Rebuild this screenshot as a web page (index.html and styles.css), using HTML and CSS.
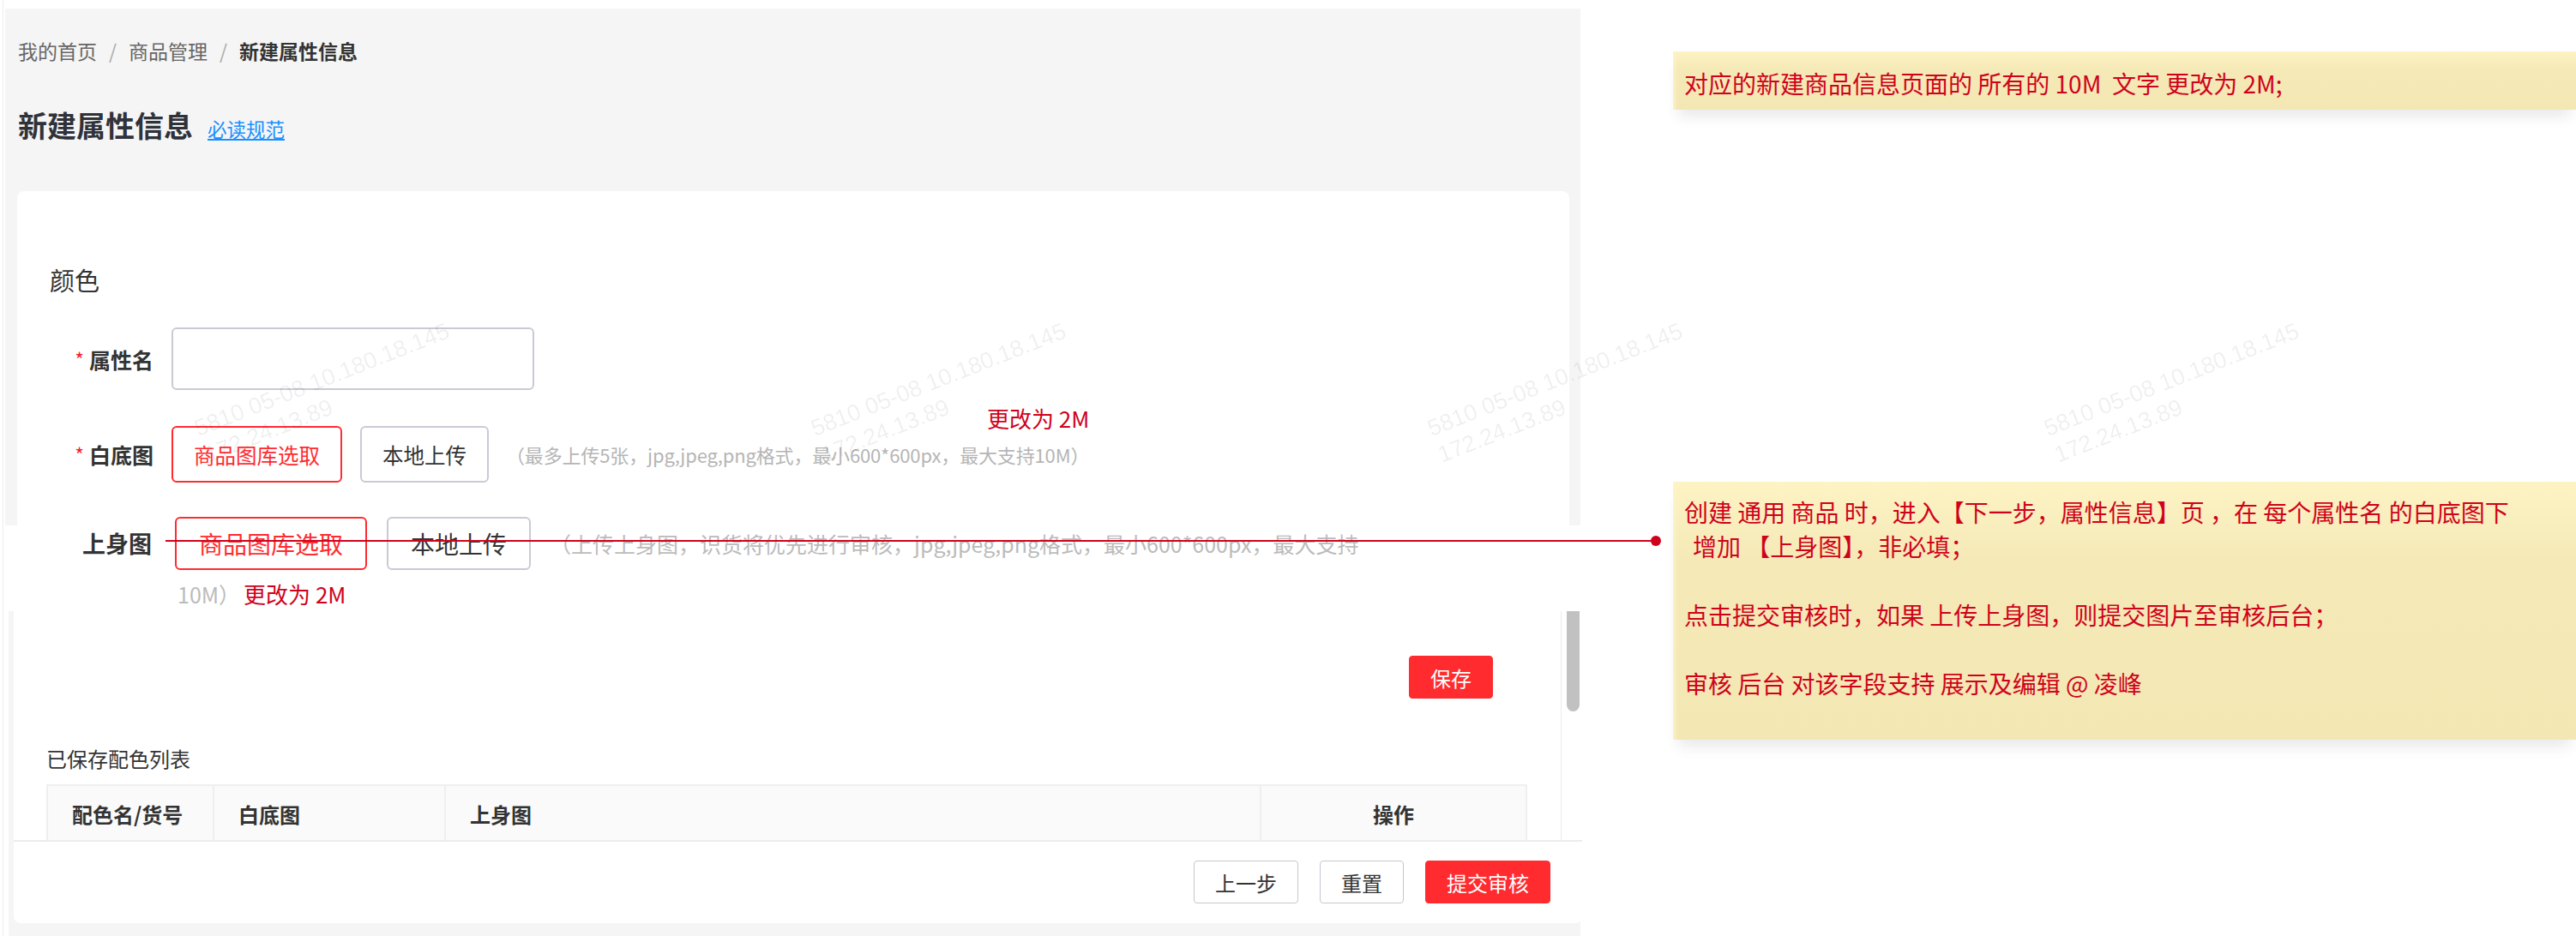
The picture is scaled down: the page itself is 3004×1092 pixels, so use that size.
FILE: index.html
```html
<!DOCTYPE html>
<html lang="zh-CN">
<head>
<meta charset="utf-8">
<title>新建属性信息</title>
<link rel="stylesheet" href="styles.css">
</head>
<body>
<div class="canvas">
  <div class="screen">
    <div class="panel">
      <nav class="crumbs"><span>我的首页</span><span class="sep">/</span><span>商品管理</span><span class="sep">/</span><b>新建属性信息</b></nav>
      <div class="page-title"><h1>新建属性信息</h1><a href="#">必读规范</a></div>
      <div class="card">
        <div class="section-title">颜色</div>
        <div class="form-row row-name">
          <label class="lbl"><i class="req">*</i>属性名</label>
          <div class="text-input"></div>
        </div>
        <div class="form-row row-white">
          <label class="lbl"><i class="req">*</i>白底图</label>
          <button class="btn btn-red">商品图库选取</button>
          <button class="btn">本地上传</button>
          <span class="hint">（最多上传5张，jpg,jpeg,png格式，最小600*600px，最大支持10M）<span class="mark mark-top">更改为 2M</span></span>
        </div>
      </div>
    </div>

    <div class="strip">
      <div class="strip-row">
        <label class="strip-label">上身图</label>
        <button class="btn btn-lg btn-red">商品图库选取</button>
        <button class="btn btn-lg">本地上传</button>
        <span class="strip-hint">（上传上身图，识货将优先进行审核，jpg,jpeg,png格式，最小600*600px，最大支持</span>
      </div>
      <div class="strip-line2"><span>10M）</span><span class="mark">更改为 2M</span></div>
    </div>

    <div class="lower">
      <div class="lower-card">
        <div class="scroll-area">
          <div class="scroll-content">
            <div class="save-row"><button class="btn btn-sm btn-solid">保存</button></div>
            <div class="list-title">已保存配色列表</div>
            <table class="color-table">
              <thead>
                <tr>
                  <th class="c1">配色名/货号</th>
                  <th class="c2">白底图</th>
                  <th class="c3">上身图</th>
                  <th class="c4">操作</th>
                </tr>
              </thead>
            </table>
          </div>
          <div class="scrollbar"><div class="thumb"></div></div>
        </div>
        <div class="footer">
          <button class="btn btn-sm">上一步</button>
          <button class="btn btn-sm">重置</button>
          <button class="btn btn-sm btn-solid">提交审核</button>
        </div>
      </div>
    </div>
  </div>

  <div class="notes">
    <div class="note note-1">
      <p>对应的新建商品信息页面的 所有的 10M&nbsp; 文字 更改为 2M;</p>
    </div>
    <div class="note note-2">
      <p>创建 通用 商品 时，进入【下一步，属性信息】页 ，在 每个属性名 的白底图下<br><span class="indent">增加 【上身图】，非必填；</span></p>
      <p>点击提交审核时，如果 上传上身图，则提交图片至审核后台；</p>
      <p>审核 后台 对该字段支持 展示及编辑 @ 凌峰</p>
    </div>
  </div>

  <div class="pointer"></div>

  <div class="wm wm-a">5810 05-08 10.180.18.145<br>172.24.13.89</div>
  <div class="wm wm-b">5810 05-08 10.180.18.145<br>172.24.13.89</div>
  <div class="wm wm-c">5810 05-08 10.180.18.145<br>172.24.13.89</div>
  <div class="wm wm-d">5810 05-08 10.180.18.145<br>172.24.13.89</div>
</div>
</body>
</html>
```

FILE: styles.css
```css
* { box-sizing: border-box; margin: 0; padding: 0; }

html, body {
  width: 3004px;
  height: 1092px;
  overflow: hidden;
  background: #fff;
}

body {
  font-family: "Noto Sans CJK SC", "Noto Sans", sans-serif;
  color: #333;
}

.canvas {
  position: relative;
  display: flex;
  align-items: flex-start;
  width: 3004px;
  height: 1092px;
  padding-left: 3px;
}

/* ---------- left: the product screen ---------- */
.screen {
  width: 1840px;
  height: 1092px;
  flex-shrink: 0;
  border-left: 1px solid #ececec;
  padding-top: 10px;
  display: flex;
  flex-direction: column;
}

.panel {
  margin-left: 2px;
  height: 603px;
  background: #f5f5f5;
  padding: 33px 13px 0 14px;
  display: flex;
  flex-direction: column;
}

.crumbs {
  display: flex;
  font-size: 23px;
  line-height: 32px;
  color: #666;
  padding-left: 1px;
}
.crumbs .sep { color: #aaa; margin: 0 14px; }
.crumbs b { color: #333; font-weight: 700; }

.page-title {
  margin-top: 48px;
  display: flex;
  align-items: baseline;
  gap: 17px;
  padding-left: 1px;
}
.page-title h1 {
  font-size: 34px;
  line-height: 46px;
  font-weight: 700;
  color: #30323a;
}
.page-title a {
  font-size: 22.5px;
  color: #1890ff;
  text-decoration: underline;
}

.card {
  margin-top: 54px;
  flex: 1;
  background: #fff;
  border-radius: 8px 8px 0 0;
  padding: 83px 0 0 38px;
}

.section-title {
  font-size: 29px;
  line-height: 40px;
  color: #333;
}

.form-row {
  display: flex;
  align-items: center;
  gap: 21px;
}
.row-name { margin-top: 36px; }
.row-white { margin-top: 42px; }

.lbl {
  width: 121px;
  display: flex;
  justify-content: flex-end;
  align-items: center;
  font-size: 25px;
  line-height: 34px;
  font-weight: 700;
  color: #333;
}
.lbl .req {
  font-style: normal;
  font-weight: 400;
  color: #f5222d;
  font-size: 23px;
  margin-right: 6px;
}

.text-input {
  width: 423px;
  height: 73px;
  border: 2px solid #c9cad5;
  border-radius: 6px;
  background: #fff;
}

.btn {
  height: 66px;
  padding: 0 24px;
  border: 2px solid #c9cad5;
  border-radius: 6px;
  background: #fff;
  font-family: inherit;
  font-size: 24.5px;
  color: #333;
  white-space: nowrap;
}
.btn-red { border-color: #ff2b2f; color: #ff2b2f; }

.hint {
  position: relative;
  margin-left: -1px;
  font-size: 22px;
  letter-spacing: -0.15px;
  line-height: 32px;
  color: #b5b5b5;
  white-space: nowrap;
}

.mark {
  color: #d0021b;
  font-size: 26px;
  line-height: 32px;
  letter-spacing: 0;
  white-space: nowrap;
}
.mark-top {
  position: absolute;
  right: 0;
  top: -42px;
}

/* ---------- pasted strip: 上身图 ---------- */
.strip {
  height: 100px;
  background: #fff;
  position: relative;
}
.strip-row {
  display: flex;
  align-items: center;
  height: 62px;
  margin-top: -10px;
}
.strip-label {
  width: 173px;
  margin-right: 27px;
  text-align: right;
  font-size: 27px;
  line-height: 36px;
  font-weight: 700;
  color: #333;
}
.btn-lg {
  height: 62px;
  padding: 0 26px;
  font-size: 28px;
}
.btn-lg + .btn-lg { margin-left: 23px; }
.strip-hint {
  margin-left: 22px;
  font-size: 25px;
  line-height: 32px;
  color: #bbb;
  white-space: nowrap;
}
.strip-line2 {
  margin-top: 13px;
  height: 30px;
  padding-left: 203px;
  display: flex;
  align-items: center;
  gap: 4px;
  font-size: 25px;
  line-height: 30px;
  color: #bbb;
}

/* ---------- lower part ---------- */
.lower {
  flex: 1;
  margin-left: 6px;
  background: #f5f5f5;
  padding: 0 0 15px 6px;
  display: flex;
}
.lower-card {
  flex: 1;
  background: #fff;
  border-radius: 0 0 8px 8px;
  display: flex;
  flex-direction: column;
}
.scroll-area {
  height: 267px;
  display: flex;
}
.scroll-content {
  flex: 1;
  padding: 52px 39px 0 38px;
}
.scrollbar {
  width: 25px;
  border-left: 1px solid #ebebeb;
  padding-left: 6px;
}
.thumb {
  width: 15px;
  height: 117px;
  background: #c1c1c1;
  border-radius: 0 0 8px 8px;
}

.save-row {
  display: flex;
  justify-content: flex-end;
  padding-right: 40px;
}
.btn-sm {
  height: 50px;
  padding: 0 24px;
  border: 1px solid #c5c7d0;
  border-radius: 4px;
  font-size: 24px;
}
.btn-solid {
  background: #ff2b2f;
  border-color: #ff2b2f;
  color: #fff;
}

.list-title {
  margin-top: 53px;
  font-size: 24px;
  line-height: 34px;
  color: #333;
}

.color-table {
  margin-top: 13px;
  width: 1725px;
  border-collapse: collapse;
  table-layout: fixed;
}
.color-table th {
  height: 65px;
  background: #fafafa;
  border: 2px solid #efefef;
  border-bottom: none;
  font-size: 24px;
  font-weight: 700;
  color: #333;
  text-align: left;
  padding-left: 28px;
}
.color-table .c1 { width: 194px; }
.color-table .c2 { width: 270px; }
.color-table .c3 { width: 951px; }
.color-table .c4 { width: 310px; text-align: center; padding-left: 0; }

.footer {
  flex: 1;
  border-top: 2px solid #ececec;
  display: flex;
  justify-content: flex-end;
  align-items: flex-start;
  gap: 25px;
  padding: 22px 37px 0 0;
}

/* ---------- right: sticky notes ---------- */
.notes {
  margin-left: 108px;
  flex: 1;
  display: flex;
  flex-direction: column;
}
.note {
  background: linear-gradient(to bottom, #fdf3c4 0%, #f5e9b7 30%, #f3e7b4 100%);
  box-shadow: 0 14px 16px -6px rgba(0, 0, 0, 0.09), inset 5px 0 5px -3px #fdf4c9;
  color: #d0021b;
  font-size: 28px;
  line-height: 40px;
  padding-left: 13px;
  white-space: nowrap;
}
.note-1 {
  margin-top: 60px;
  height: 68px;
  padding-top: 17px;
}
.note-2 {
  margin-top: 434px;
  height: 301px;
  padding-top: 15px;
}
.note-2 p + p { margin-top: 40px; }
.note .indent { margin-left: 10px; }

/* ---------- overlays ---------- */
.pointer {
  position: absolute;
  left: 193px;
  top: 630px;
  width: 1738px;
  height: 2px;
  background: #d0021b;
}
.pointer::after {
  content: "";
  position: absolute;
  right: -6px;
  top: -5px;
  width: 12px;
  height: 12px;
  border-radius: 50%;
  background: #d0021b;
}

.wm {
  position: absolute;
  top: 486px;
  transform: rotate(-21.5deg);
  transform-origin: 0 0;
  font-family: "Liberation Sans", Arial, sans-serif;
  font-size: 27px;
  line-height: 33px;
  color: rgba(0, 0, 0, 0.07);
  white-space: nowrap;
  pointer-events: none;
}
.wm-a { left: 222px; }
.wm-b { left: 941px; }
.wm-c { left: 1660px; }
.wm-d { left: 2379px; }
```
